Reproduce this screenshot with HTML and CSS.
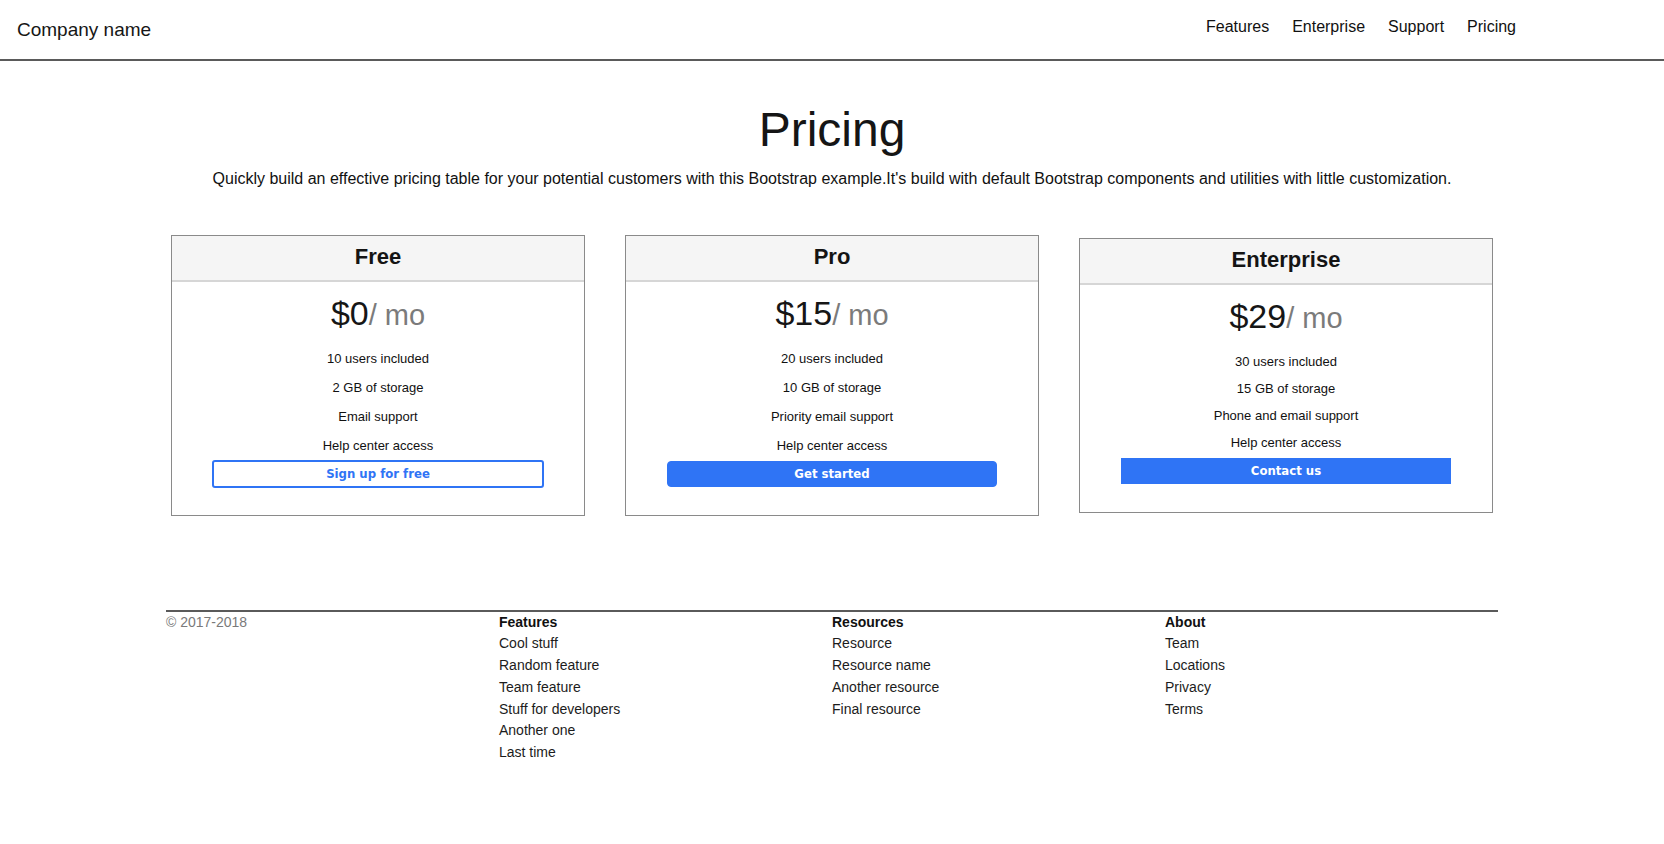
FILE: index.html
```html
<!DOCTYPE html>
<html lang="en">
<head>
<meta charset="utf-8">
<title>Pricing</title>
<link rel="stylesheet" href="styles.css">
</head>
<body>
<header class="topbar">
  <div class="brand">Company name</div>
  <nav class="topnav">
    <a href="#">Features</a>
    <a href="#">Enterprise</a>
    <a href="#">Support</a>
    <a href="#">Pricing</a>
  </nav>
</header>

<main>
  <section class="hero">
    <h1 class="hero-title">Pricing</h1>
    <p class="hero-lead">Quickly build an effective pricing table for your potential customers with this Bootstrap example.It's build with default Bootstrap components and utilities with little customization.</p>
  </section>

  <section class="plans">
    <article class="plan">
      <div class="plan-head"><h2 class="plan-name">Free</h2></div>
      <div class="plan-body">
        <div class="price">$0<small class="price-unit">/ mo</small></div>
        <ul class="features">
          <li>10 users included</li>
          <li>2 GB of storage</li>
          <li>Email support</li>
          <li>Help center access</li>
        </ul>
        <button class="btn btn-outline" type="button">Sign up for free</button>
      </div>
    </article>

    <article class="plan">
      <div class="plan-head"><h2 class="plan-name">Pro</h2></div>
      <div class="plan-body">
        <div class="price">$15<small class="price-unit">/ mo</small></div>
        <ul class="features">
          <li>20 users included</li>
          <li>10 GB of storage</li>
          <li>Priority email support</li>
          <li>Help center access</li>
        </ul>
        <button class="btn btn-solid" type="button">Get started</button>
      </div>
    </article>

    <article class="plan plan-compact">
      <div class="plan-head"><h2 class="plan-name">Enterprise</h2></div>
      <div class="plan-body">
        <div class="price">$29<small class="price-unit">/ mo</small></div>
        <ul class="features">
          <li>30 users included</li>
          <li>15 GB of storage</li>
          <li>Phone and email support</li>
          <li>Help center access</li>
        </ul>
        <button class="btn btn-solid btn-square" type="button">Contact us</button>
      </div>
    </article>
  </section>
</main>

<footer class="site-footer">
  <div class="footer-col">
    <span class="copyright">&copy; 2017-2018</span>
  </div>
  <div class="footer-col">
    <h5 class="footer-head">Features</h5>
    <ul class="footer-links">
      <li><a href="#">Cool stuff</a></li>
      <li><a href="#">Random feature</a></li>
      <li><a href="#">Team feature</a></li>
      <li><a href="#">Stuff for developers</a></li>
      <li><a href="#">Another one</a></li>
      <li><a href="#">Last time</a></li>
    </ul>
  </div>
  <div class="footer-col">
    <h5 class="footer-head">Resources</h5>
    <ul class="footer-links">
      <li><a href="#">Resource</a></li>
      <li><a href="#">Resource name</a></li>
      <li><a href="#">Another resource</a></li>
      <li><a href="#">Final resource</a></li>
    </ul>
  </div>
  <div class="footer-col">
    <h5 class="footer-head">About</h5>
    <ul class="footer-links">
      <li><a href="#">Team</a></li>
      <li><a href="#">Locations</a></li>
      <li><a href="#">Privacy</a></li>
      <li><a href="#">Terms</a></li>
    </ul>
  </div>
</footer>
</body>
</html>
```

FILE: styles.css
```css
* { box-sizing: border-box; }

body {
  margin: 0;
  font-family: "Liberation Sans", Arial, sans-serif;
  color: #161616;
  background: #fff;
}

a { color: inherit; text-decoration: none; }

/* ---------- top bar ---------- */
.topbar {
  display: flex;
  justify-content: space-between;
  align-items: flex-start;
  height: 61px;
  padding: 0 148px 0 17px;
  border-bottom: 2px solid #5a5a5a;
}

.brand {
  margin-top: 19px;
  font-size: 19px;
  line-height: 22px;
  color: #161616;
}

.topnav {
  display: flex;
  gap: 23px;
  margin-top: 17px;
  font-size: 16px;
  line-height: 20px;
}

.topnav a { color: #111; }

/* ---------- hero ---------- */
.hero { text-align: center; }

.hero-title {
  margin: 40px 0 0;
  font-size: 48px;
  line-height: 57.6px;
  font-weight: 400;
  color: #151515;
}

.hero-lead {
  margin: 8px 0 0;
  font-size: 16px;
  line-height: 24px;
  color: #111;
}

/* ---------- plans ---------- */
.plans {
  display: grid;
  grid-template-columns: repeat(3, 1fr);
  gap: 40px;
  align-items: center;
  width: 1322px;
  margin: 44px auto 0;
}

.plan {
  border: 1px solid #8a8a8a;
  background: #fff;
  text-align: center;
}

.plan-head {
  background: #f5f5f5;
  border-bottom: 2px solid #d6d6d6;
  padding: 8px 0 10px;
}

.plan-name {
  margin: 0;
  font-size: 22px;
  line-height: 26px;
  font-weight: 700;
  color: #141414;
}

.plan-body {
  padding: 0 0 28px;
}

.price {
  margin-top: 11px;
  font-size: 34px;
  line-height: 40px;
  color: #161616;
}

.price-unit {
  font-size: 29px;
  color: #7b7b7b;
}

.features {
  list-style: none;
  margin: 9px 0 0;
  padding: 0;
  font-size: 13px;
  line-height: 29px;
  color: #111;
}

.plan-compact .features {
  margin-top: 10px;
  line-height: 27.3px;
}

.btn {
  display: block;
  width: 80%;
  height: 26px;
  margin: 1px auto 0;
  padding: 0;
  font-family: "DejaVu Sans Condensed", "DejaVu Sans", sans-serif;
  font-stretch: condensed;
  font-size: 13px;
  font-weight: 700;
  line-height: 20px;
  cursor: pointer;
}

.btn-outline {
  width: calc(80% + 3px);
  height: 28px;
  margin: 0 auto -1px;
  border: 2px solid #2f74f5;
  border-radius: 3px;
  background: #fff;
  color: #2f74f5;
}

.btn-solid {
  border: 1px solid #2f74f5;
  border-radius: 4px;
  background: #2f74f5;
  color: #fff;
}

.btn-square { border-radius: 0; }

/* ---------- footer ---------- */
.site-footer {
  display: grid;
  grid-template-columns: repeat(4, 1fr);
  width: 1332px;
  margin: 94px auto 0;
  border-top: 2px solid #5a5a5a;
  font-size: 14px;
  line-height: 21.75px;
  padding-bottom: 40px;
}

.copyright { color: #7a7a7a; }

.footer-head {
  margin: 0;
  font-size: 14px;
  font-weight: 700;
  line-height: 21.75px;
  color: #111;
}

.footer-links {
  list-style: none;
  margin: 0;
  padding: 0;
}

.footer-links a { color: #1c1c1c; }
```
